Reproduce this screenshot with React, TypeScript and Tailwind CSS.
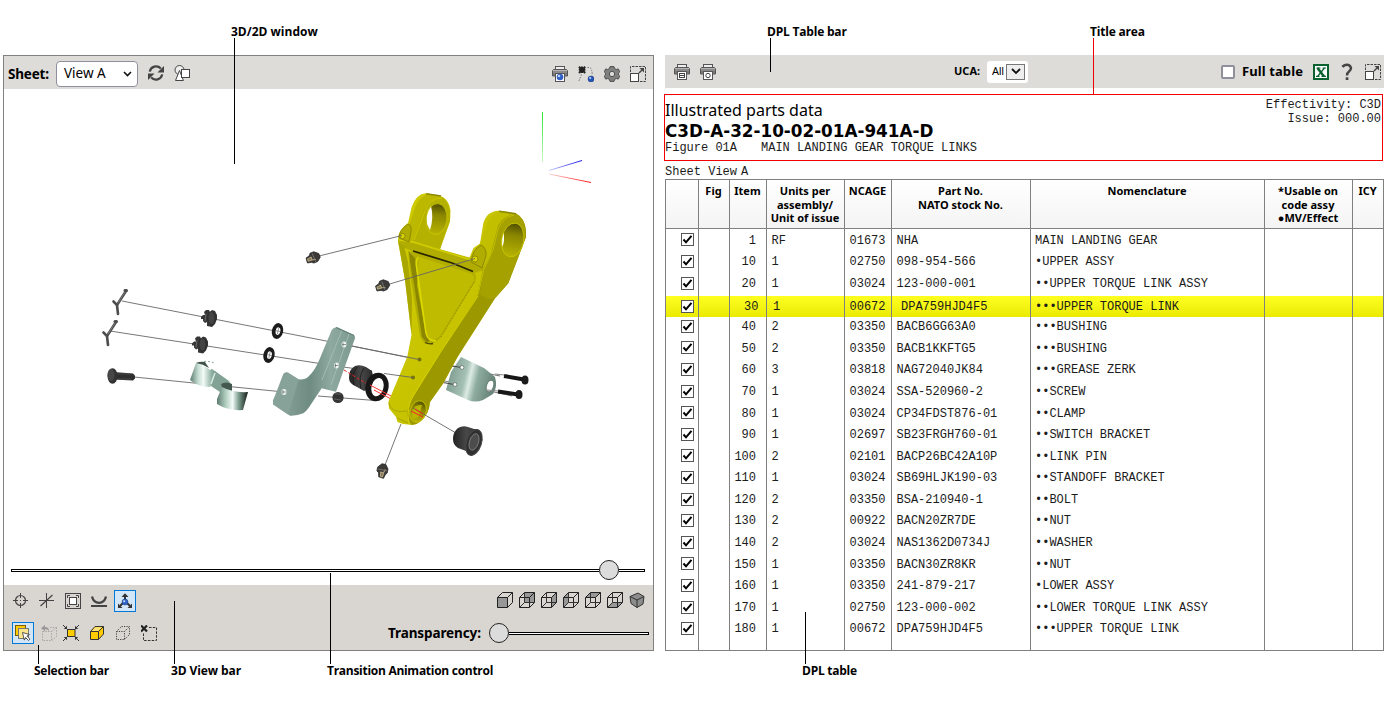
import React from "react";

type Part = { item: string; units: string; cage: string; part: string; name: string; active?: boolean };

const parts: Part[] = [
  { item: "1", units: "RF", cage: "01673", part: "NHA", name: "MAIN LANDING GEAR" },
  { item: "10", units: "1", cage: "02750", part: "098-954-566", name: "•UPPER ASSY" },
  { item: "20", units: "1", cage: "03024", part: "123-000-001", name: "••UPPER TORQUE LINK ASSY" },
  { item: "30", units: "1", cage: "00672", part: "DPA759HJD4F5", name: "•••UPPER TORQUE LINK", active: true },
  { item: "40", units: "2", cage: "03350", part: "BACB6GG63A0", name: "•••BUSHING" },
  { item: "50", units: "2", cage: "03350", part: "BACB1KKFTG5", name: "•••BUSHING" },
  { item: "60", units: "3", cage: "03818", part: "NAG72040JK84", name: "•••GREASE ZERK" },
  { item: "70", units: "1", cage: "03024", part: "SSA-520960-2", name: "••SCREW" },
  { item: "80", units: "1", cage: "03024", part: "CP34FDST876-01", name: "••CLAMP" },
  { item: "90", units: "1", cage: "02697", part: "SB23FRGH760-01", name: "••SWITCH BRACKET" },
  { item: "100", units: "2", cage: "02101", part: "BACP26BC42A10P", name: "••LINK PIN" },
  { item: "110", units: "1", cage: "03024", part: "SB69HLJK190-03", name: "••STANDOFF BRACKET" },
  { item: "120", units: "2", cage: "03350", part: "BSA-210940-1", name: "••BOLT" },
  { item: "130", units: "2", cage: "00922", part: "BACN20ZR7DE", name: "••NUT" },
  { item: "140", units: "2", cage: "03024", part: "NAS1362D0734J", name: "••WASHER" },
  { item: "150", units: "1", cage: "03350", part: "BACN30ZR8KR", name: "••NUT" },
  { item: "160", units: "1", cage: "03350", part: "241-879-217", name: "•LOWER ASSY" },
  { item: "170", units: "1", cage: "02750", part: "123-000-002", name: "••LOWER TORQUE LINK ASSY" },
  { item: "180", units: "1", cage: "00672", part: "DPA759HJD4F5", name: "•••UPPER TORQUE LINK" },
];

const SANS = "font-['Noto_Sans',sans-serif]";
const MONO = "font-['Liberation_Mono',monospace] text-[#1c1c1c]";
const COLS = "grid grid-cols-[33px_31px_37px_78px_47px_139px_234px_88px_31px]";

function Icon({ children, size = 16 }: { children: React.ReactNode; size?: number }) {
  return (
    <svg width={size} height={size} viewBox="0 0 16 16" fill="none" className="block shrink-0">
      {children}
    </svg>
  );
}

function RefreshIcon() {
  return (
    <Icon>
      <path d="M1.8 6.6A6.400 6.400 0 0 1 12.800 3.400M14.200 9.400A6.400 6.400 0 0 1 3.200 12.600" stroke="#444" strokeWidth="2.200" />
      <path d="M16 1V7.600H9.400zM0 15V8.400h6.600z" fill="#444" />
    </Icon>
  );
}

function ShapesIcon() {
  return (
    <Icon>
      <circle cx="5.5" cy="5" r="4.5" stroke="#444" fill="#eee" />
      <path d="M5.5 5.5L9.4 15.5H1.5z" fill="#fff" stroke="#444" />
      <rect x="7.5" y="4.5" width="8" height="8" fill="#fff" stroke="#444" />
    </Icon>
  );
}

function Printer({ mark }: { mark: "globe" | "page" | "circle" }) {
  return (
    <Icon>
      <rect x="3.5" y=".5" width="9" height="4" fill="#eee" stroke="#555" />
      <path d="M1.5 3.5h13l1 1.5v5h-15V5z" fill="#8b8b8b" stroke="#555" />
      <path d="M1 4.5h14" stroke="#b5b5b5" />
      <path d="M1 8h14" stroke="#666" />
      <rect x="3.5" y="7.5" width="9" height="8" fill="#fff" stroke="#555" />
      {mark === "globe" && (
        <>
          <circle cx="8" cy="11" r="3.3" fill="#2f5fc4" />
          <circle cx="7" cy="10" r="1.3" fill="#b8d0ff" />
        </>
      )}
      {mark === "page" && <path d="M5 9.5h6M5 13.5h6M5.5 9v5M10.5 9v5M6 11.5h4" stroke="#444" />}
      {mark === "circle" && <circle cx="8" cy="11.5" r="2.2" stroke="#444" />}
    </Icon>
  );
}

function PathIcon() {
  return (
    <Icon>
      <path d="M1 .8l6.200 6.200M7.200 .8L1 7M4 .5v6.500M.8 3.800h6.600" stroke="#222" strokeWidth="2" />
      <path d="M9.5 1.5h2.5q2 1 2.3 8M3.5 8.5L.5 16" stroke="#777" strokeDasharray="1.5 1.2" />
      <circle cx="13" cy="13" r="3" fill="#2456b8" stroke="#14306e" strokeWidth=".5" />
      <circle cx="12.2" cy="12" r="1.1" fill="#bcd3ff" />
    </Icon>
  );
}

function GearIcon() {
  return (
    <Icon>
      <path
        d="M6 .6h4l.6 2 1.6.9 2.1-.6 1.5 3-1.3 1.2v1.8l1.3 1.2-1.5 3-2.1-.6-1.6.9-.6 2H6l-.6-2-1.6-.9-2.1.6-1.5-3 1.3-1.2V7.1L.2 5.9l1.5-3 2.1.6 1.6-.9z"
        fill="#808080"
        stroke="#505050"
      />
      <circle cx="8" cy="8" r="2.7" fill="#dddcd8" stroke="#505050" />
    </Icon>
  );
}

function ExpandIcon() {
  return (
    <Icon>
      <path d="M.5 6V.5h15v15H9" stroke="#444" strokeDasharray="2.5 1" />
      <rect x=".5" y="7.5" width="8" height="8" fill="#fff" stroke="#444" />
      <path d="M9 7l3-3" stroke="#444" strokeWidth="1.5" />
      <path d="M9.5 2H14v4.5z" fill="#444" />
    </Icon>
  );
}

function TargetIcon() {
  return (
    <Icon>
      <circle cx="7.500" cy="7.500" r="5" stroke="#444" strokeWidth="1.200" />
      <path d="M7.500 0v5M7.500 10v5M0 7.500h5M10 7.500h5M7 7.500h1" stroke="#444" />
    </Icon>
  );
}

function AxesIcon() {
  return (
    <Icon>
      <path d="M7.500 0v15M0 7.500h15" stroke="#444" />
      <path d="M1.500 13L13.500 2" stroke="#444" strokeWidth="1.200" />
    </Icon>
  );
}

function FitIcon() {
  return (
    <Icon>
      <rect x=".5" y=".5" width="15" height="15" stroke="#444" />
      <path d="M2.5 5V2.5H5M11 2.5h2.5V5M13.5 11v2.5H11M5 13.5H2.5V11" stroke="#444" />
      <rect x="4.5" y="4.5" width="7" height="7" fill="#fff" stroke="#444" />
    </Icon>
  );
}

function SurfaceIcon() {
  return (
    <Icon>
      <path d="M0 13h16" stroke="#444" strokeWidth="2" />
      <path d="M1 3.500q1.500 6.300 7 6.300T15 3.500" stroke="#444" strokeWidth="2.300" />
    </Icon>
  );
}

function ExplodeIcon() {
  return (
    <Icon>
      <path d="M8 7V3M7 9l-4 4M9 9l4 4" stroke="#333" strokeWidth="2" />
      <path d="M4.5 4L8 .3 11.5 4zM1 10.5V15h4.5zM15 10.5V15h-4.5z" fill="#333" />
      <circle cx="8" cy="9" r="3" fill="#2f63c8" stroke="#1c3b80" strokeWidth=".5" />
      <circle cx="7.2" cy="8.2" r="1" fill="#cfe0ff" />
    </Icon>
  );
}

function SelectIcon() {
  return (
    <Icon>
      <rect x=".5" y=".5" width="10" height="10" fill="#fc0" stroke="#7a5c00" />
      <rect x="3.500" y="3.500" width="10" height="10" fill="#ffe58a" stroke="#777" />
      <path d="M7.5 7.5l7 2-2.6 1.6 3 3-1.5 1.4-2.8-3-1.3 2.6z" fill="#fff" stroke="#444" strokeWidth=".9" />
    </Icon>
  );
}

function UndoCubeIcon() {
  return (
    <Icon>
      <path d="M1.5 6.5h9v9h-9zM10.5 6.5l5-4M15.5 2.5v9l-4.5 4M9 2.5h6.500" stroke="#a5a5a5" strokeDasharray="1.5 1.2" />
      <path d="M0 3.200L4 0v2q4 .2 4 4-1.300-2-4-1.800v2z" fill="#999" />
    </Icon>
  );
}

function ConvergeIcon() {
  return (
    <Icon>
      <rect x="4.500" y="4.500" width="7.500" height="7" fill="#fc0" stroke="#333" />
      <path d="M0 0l3.500 3.500M16 0l-3.500 3.500M0 16l3.500-3.500M16 16l-3.500-3.500" stroke="#333" />
      <path d="M4 .8V4H.8zM12 .8V4h3.200zM4 15.200V12H.8zM12 15.200V12h3.200z" fill="#333" />
    </Icon>
  );
}

function YellowCubeIcon() {
  return (
    <Icon>
      <path d="M1.500 6.500L6 1.500h8.500V9L9.500 14.500h-8z" fill="#fc0" stroke="#333" />
      <path d="M3 6L6.300 2.200H13L9.200 6z" fill="#ffe27a" />
      <path d="M1.500 6.500h8v8M9.500 6.500l5-5" stroke="#333" />
    </Icon>
  );
}

function DottedCubeIcon() {
  return (
    <Icon>
      <path d="M1.500 6.500h8v8h-8zM1.500 6.500l5-5h8v8l-5 5M9.500 6.500l5-5" stroke="#444" strokeDasharray="1.200 1.200" />
    </Icon>
  );
}

function DeselectIcon() {
  return (
    <Icon>
      <path d="M0 .500l6 6M6 .500l-6 6" stroke="#222" strokeWidth="2.200" />
      <path d="M8 2.500h7.500v13h-13V8" stroke="#333" strokeDasharray="2.500 1.300" />
    </Icon>
  );
}

const cubeFaces = [
  "M.5 5.500h10v10h-10z",
  "M5.500 .500h10v10h-10z",
  "M10.500 5.500L15.500 .500v10l-5 5z",
  "M.5 5.500L5.500 .500v10l-5 5z",
  "M.5 5.500L5.500 .500h10l-5 5z",
  "M.5 15.500L5.500 10.500h10l-5 5z",
];

function CubeIcon({ face }: { face: number }) {
  return (
    <Icon>
      <path d={cubeFaces[face]} fill="#979797" />
      <path d="M.5 5.500h10v10h-10zM.5 5.500L5.500 .500h10v10l-5 5M10.500 5.500L15.500 .500" stroke="#222" />
      {face !== 0 && <path d="M5.500 .500v10h10M5.500 10.500l-5 5" stroke="#333" />}
    </Icon>
  );
}

function IsoCubeIcon() {
  return (
    <Icon>
      <path d="M1 4.500L9 1l6 3.500-1 7.500-6 3.500-6-4z" fill="#8c8c8c" stroke="#333" strokeLinejoin="round" />
      <path d="M1 4.500l7 3.500 7-3.500M8 8v7.500" stroke="#333" />
    </Icon>
  );
}

function ExcelIcon() {
  return (
    <Icon>
      <rect x="1" y="1" width="14" height="14" fill="#fff" stroke="#0b6130" strokeWidth="2" />
      <path d="M4.500 4l6.500 8.500" stroke="#0b6130" strokeWidth="2.500" />
      <path d="M11.500 4l-7 8.500M3.500 4h4M9.500 4H13M3 12.300h3.500M8.500 12.300H13" stroke="#0b6130" strokeWidth="1.200" />
    </Icon>
  );
}

function Nut({ x, y }: { x: number; y: number }) {
  return (
    <g transform={`translate(${x} ${y})`}>
      <path d="M-7-1l2-2 2 0-1-3 2-2 3 0 1 2 2-2 3 1 2 4 0 4-2 5-3 3-5-1v-4l-2 1-2-2 0-2-2 0z" fill="#363636" />
      <path d="M-2-4l-1 7M2-5q-2 5 0 10" stroke="#777" strokeWidth=".8" fill="none" />
      <ellipse cx="3.500" cy="0" rx="3.500" ry="6.500" fill="#444" stroke="#222" strokeWidth=".6" />
    </g>
  );
}

function Washer({ x, y }: { x: number; y: number }) {
  return (
    <g transform={`translate(${x} ${y}) rotate(12)`}>
      <ellipse rx="5.600" ry="8" fill="#1b1b1b" />
      <ellipse cx=".5" rx="2.300" ry="3.800" fill="#fff" />
      <path d="M-2 0H3M.5-3V3" stroke="#777" strokeWidth=".7" />
    </g>
  );
}

function Cotter({ x, y }: { x: number; y: number }) {
  return (
    <g transform={`translate(${x} ${y})`} stroke="#4c4c4c" strokeLinecap="round" fill="none">
      <path d="M0 0l9-14" strokeWidth="2.600" />
      <path d="M-3.500-3.500L0 0l1 9" strokeWidth="2.600" />
      <path d="M1-2l7-11" stroke="#8b8b8b" strokeWidth=".7" />
      <path d="M8-14.500h1.500" strokeWidth="3" />
    </g>
  );
}

function Zerk({ x, y, r }: { x: number; y: number; r: number }) {
  return (
    <g transform={`translate(${x} ${y}) rotate(${r})`}>
      <path d="M-6.500-2.500l4-1 1.500-2h4l4 3.500v4L3 5h-4l-2-1.500-4-1z" fill="#3c3a38" stroke="#252525" strokeWidth=".7" strokeLinejoin="round" />
      <path d="M-5.500-1l4-.5v3l-4-.3zM-1 1.500l3 1" stroke="#b7a985" fill="#827758" />
      <path d="M1-4.500v9" stroke="#85817b" strokeWidth=".7" />
    </g>
  );
}

function Assembly() {
  return (
    <svg className="block" width="649" height="496" viewBox="4 89 649 496" fill="none">
      <defs>
        <linearGradient id="teal" x1="0" x2="1">
          <stop offset="0" stopColor="#8fa89f" />
          <stop offset=".45" stopColor="#6f8c82" />
          <stop offset=".7" stopColor="#8eaaa0" />
          <stop offset="1" stopColor="#7c998f" />
        </linearGradient>
        <linearGradient id="shine" x1="0" x2="1" y2=".2">
          <stop offset="0" stopColor="#718f84" />
          <stop offset=".45" stopColor="#a5c0b5" />
          <stop offset=".55" stopColor="#dcebe5" />
          <stop offset=".7" stopColor="#8dab9f" />
          <stop offset="1" stopColor="#6b877c" />
        </linearGradient>
        <linearGradient id="clampFill" x1="0" x2="1">
          <stop offset="0" stopColor="#5d7b6f" />
          <stop offset=".25" stopColor="#a8c6b8" />
          <stop offset=".5" stopColor="#f3fbf8" />
          <stop offset=".7" stopColor="#7e9e91" />
          <stop offset="1" stopColor="#151c19" />
        </linearGradient>
        <linearGradient id="clampLeft" x1="0" x2="1">
          <stop offset="0" stopColor="#5d7b6f" />
          <stop offset=".3" stopColor="#c4dcd1" />
          <stop offset=".5" stopColor="#f3fbf8" />
          <stop offset=".8" stopColor="#8fb0a2" />
          <stop offset="1" stopColor="#6f8f82" />
        </linearGradient>
        <linearGradient id="front" x1="0" y1="0" x2="1" y2="1">
          <stop offset="0" stopColor="#d0cc00" />
          <stop offset="1" stopColor="#bfbb00" />
        </linearGradient>
        <linearGradient id="bore" x1="0" y1="0" x2="0" y2="1">
          <stop offset="0" stopColor="#4f4d00" />
          <stop offset=".35" stopColor="#8a8600" />
          <stop offset="1" stopColor="#b8b400" />
        </linearGradient>
        <linearGradient id="dark" x1="0" x2="1">
          <stop offset="0" stopColor="#232323" />
          <stop offset=".5" stopColor="#484848" />
          <stop offset="1" stopColor="#2a2a2a" />
        </linearGradient>
        <linearGradient id="axisGreen" x1="0" y1="0" x2="0" y2="1">
          <stop offset="0" stopColor="#2be52b" />
          <stop offset="1" stopColor="#c8fac8" />
        </linearGradient>
        <linearGradient id="axisBlue" x1="0" x2="1">
          <stop offset="0" stopColor="#d0d0ff" />
          <stop offset="1" stopColor="#1414e0" />
        </linearGradient>
        <linearGradient id="axisRed" x1="0" x2="1">
          <stop offset="0" stopColor="#ffd8d8" />
          <stop offset="1" stopColor="#ff1414" />
        </linearGradient>
      </defs>

      <rect x="542" y="112" width="1" height="50" fill="url(#axisGreen)" />
      <path d="M549 170.500L582 160.500" stroke="url(#axisBlue)" />
      <path d="M549 174L591 182.500" stroke="url(#axisRed)" />

      <g stroke="#777" strokeWidth="1">
        <path d="M122 301L344 344.500M110 331L336 366M134 377L284 392M344 344.500L500 376M336 366L372 371M318 396L375 400.500M440 380L512 396" />
      </g>

      <Cotter x={117} y={305} />
      <Cotter x={107} y={336} />
      <Nut x={208} y={318} />
      <Nut x={199} y={344.500} />
      <Washer x={277.500} y={331} />
      <Washer x={269} y={355} />

      <path d="M113 372l20 1.500 2 2v3l-2 2-20-1z" fill="#2f2f2f" />
      <path d="M117 374h15M117 379h14" stroke="#555" strokeWidth=".6" />
      <ellipse cx="112.500" cy="376" rx="5" ry="7.800" fill="#333" />
      <ellipse cx="111" cy="375" rx="3.500" ry="6" fill="#474747" />

      <path d="M196 363Q204 361 211 368L217 373L210 387Q198 387 190 380z" fill="url(#clampLeft)" />
      <path d="M196 363q8-2 18 1l-1 4-3 2q-6-5-14-7z" fill="#fff" />
      <path d="M196 363q4-2 9-1l4 6q-6-4-13-5z" fill="#405249" />
      <path d="M204 361.500q6-.5 10 1.500" stroke="#8aa398" strokeDasharray="2 2" />
      <path d="M215 371l14 10 3 5-9 8-12-8z" fill="#81a294" />
      <path d="M215 373l-4 11" stroke="#d8eae2" strokeWidth="1.500" />
      <path d="M221 384q5-3 11 0v7l-8 3z" fill="#45584f" />
      <path d="M222 387Q233 393 248 392L243 410Q228 411 217 404V399z" fill="url(#clampFill)" />

      <path d="M331.700 330Q334 326.500 338 327.500L354 335Q356 337 354 341L336 391.700Q328 390 321.700 388.300L311.700 403.300Q307 411 303.300 413.300Q297 416 290 415.700L273.300 404V400L283.300 374Q285 371.500 288 372.500L298.300 379.300Q305 380 308.300 376.700Q315 371 320 358.300z" fill="url(#teal)" />
      <path d="M287 372.500l12 7-11 35-15-10v-4z" fill="#87a298" />
      <path d="M338 328l4 2-20 50M349 334l-18 51" stroke="#a1bcb2" strokeWidth="1" />
      <path d="M336 327.500l18 8" stroke="#5e7b70" />
      {[[344, 344.500], [336.500, 365.500], [284, 392]].map(([cx, cy]) => (
        <g key={cx}>
          <ellipse cx={cx} cy={cy} rx="2.400" ry="3" fill="#eef4f1" />
          <path d={`M${cx - 1} ${cy - 2}v4M${cx - 2} ${cy}h4`} stroke="#5c6b65" strokeWidth=".7" />
        </g>
      ))}

      <circle cx="338" cy="397.500" r="5.600" fill="#343434" />
      <path d="M335 394l6 0M334 399l7 1" stroke="#5e5e5e" />

      <path d="M349 378q0-9 6-12 5-2 11 1l6 4 1 5-4 13-5 2-7-4q-8-3-8-9z" fill="url(#dark)" />
      <path d="M357 367q-6 8-3 18M364 368q-6 9-3 21" stroke="#171717" strokeWidth=".8" />
      <path d="M344 370L372 387" stroke="#e22" strokeDasharray="3 2" />
      <g transform="rotate(14 377 387)">
        <ellipse cx="377" cy="387" rx="11.500" ry="14.500" fill="#171717" />
        <ellipse cx="377.500" cy="387" rx="6" ry="9.300" fill="#fff" />
      </g>
      <path d="M370 385L391 396M374 390l17 9" stroke="#f33" />

      <path d="M461 357l23 11 11 9q3 10-2 17l-10 6q-8 3-15 0l-22-10 5-18z" fill="url(#shine)" />
      <ellipse cx="490" cy="386" rx="3.500" ry="6" fill="#fff" stroke="#647c72" transform="rotate(18 490 386)" />
      {[[462, 367.500], [455, 384.500]].map(([cx, cy]) => (
        <g key={cx}>
          <path d={`M${cx - 12} ${cy - 2}l11 2`} stroke="#444" />
          <circle cx={cx} cy={cy} r="1.900" fill="#fff" stroke="#53675e" strokeWidth=".7" />
        </g>
      ))}
      <path d="M495 374l9 1M487 390l11 1" stroke="#888" />
      <path d="M504 376l20 3.500M498 391.500l20 3" stroke="#171717" strokeWidth="4" />
      <ellipse cx="525" cy="380" rx="3.500" ry="4.500" fill="#1b1b1b" />
      <ellipse cx="519" cy="394.500" rx="3.500" ry="4.500" fill="#1b1b1b" />

      <path
        d="M398 241L398.500 235Q401 228 408 223L411.700 207Q416 194 426 193.300L439 195.300Q449 199 450.500 210L450 221.700L440 249.300L469.500 257.500L473.500 248L480 243.500L483.300 223.300Q487 211 498.300 210.700L516 213.500Q525 218 526 231V237L508.300 283.300L495 298.300L457.500 357L443.300 383.300L430 402Q429 415 420 421.700Q416 425 411.700 425L408 424.500L403 424L397.500 422L396 417L389 408.500L388.300 402L407.300 356.700L411.500 335L405 280z"
        fill="url(#front)"
      />
      <path d="M516 213.500Q525 218 526 231V237L508.300 283.300L495 298.300L457.500 357L443.300 383.300L430 402Q429 415 420 421.700Q416 425 411.700 425Q406 418 408 409L412 399L440 353.300L477.500 296L483 269L491 253L497 226Q504 214 516 213.500z" fill="#9c9800" />
      <path d="M478 296L440 353L413 396Q406 408 409 423" stroke="#d4d000" strokeWidth="1" />
      <path d="M415 208Q419 197 428 194L442 197Q431 198 427 207L416 240L407 242L409 225z" fill="#bcb800" />
      <path d="M442 197Q451 203 450 220L440 249L413 241L424 210Q430 198 442 197z" fill="#b5b100" />
      <path d="M487 224Q491 213 501 211L516 214Q504 215 498 226L491 253L483 268L475 258z" fill="#c2be00" />
      <path d="M516 214Q527 221 525 238L508 283L496 297Q490 302 480 294L484 269L492 253L499 226Q505 215 516 214z" fill="#a5a100" />
      <path d="M426 193.800l15 2.200M499 211.300l17 2.500" stroke="#8c8800" strokeWidth="1.600" />
      <path d="M442 198Q430 198 425 211L414 240" stroke="#cbc700" />
      <path d="M514 215Q503 217 498 229L493 250L484 269L478 295" stroke="#c3bf00" />

      <ellipse cx="436.500" cy="219" rx="10.500" ry="15.500" fill="url(#bore)" transform="rotate(7 436.500 219)" />
      <path d="M431 206Q434 218 430 230Q425 223 427 214Q428 209 431 206z" fill="#fff" />
      <ellipse cx="436.500" cy="219" rx="10.500" ry="15.500" stroke="#cbc700" strokeWidth=".8" transform="rotate(7 436.500 219)" />
      <ellipse cx="512.700" cy="240" rx="11" ry="17" fill="url(#bore)" transform="rotate(10 512.700 240)" />
      <path d="M503.500 232Q505 240 502.500 247Q500.500 241 503.500 232z" fill="#fff" />
      <ellipse cx="512.700" cy="240" rx="11" ry="17" stroke="#cbc700" strokeWidth=".8" transform="rotate(10 512.700 240)" />

      <path d="M398 239.500L412 241L482 262L484 270L474 273L411 250.500L399 246z" fill="#b1ad00" />
      <path d="M399 240L413 242L481 263" stroke="#d2ce00" strokeWidth="1.400" />
      <path d="M398.500 243L405 280L411.500 334L412 300L408 262L404 246z" fill="#aaa600" />
      <path d="M408 251L420 253L474 272.500Q477 276 475.500 281L441 337Q435 345 427 344Q423 343 420 336L411 280z" fill="#b2ae00" />
      <path d="M409 252Q410 264 414 284L422 337L427 343L430 340L418 282L415 258z" fill="#8a8600" />
      <path d="M419 257L472 274Q475 277 474 281L440 336L433 341L426 334L417 285z" fill="#bfbb00" />
      <path d="M418.500 257Q415 260 417 270L426 333Q428 341 436 341" stroke="#dcd900" strokeWidth="1.600" />
      <path d="M413 251L452 263L473 271.500" stroke="#272600" strokeWidth="1.800" />
      <path d="M425 342.500q4 2 8 1" stroke="#4a4800" strokeWidth="1.300" />
      <path d="M474 282L441 337" stroke="#7b7700" strokeWidth=".8" strokeDasharray="1 2" />

      <path d="M399 238Q399 230 408 224Q412 225 411 232L409 242z" fill="#b0ac00" stroke="#7d7900" strokeWidth=".7" />
      <circle cx="402.500" cy="236" r="2.600" fill="#d9d500" stroke="#858200" strokeWidth=".8" />
      <path d="M471 262Q472 250 481 245Q487 248 486 256L482 268z" fill="#b0ac00" stroke="#7d7900" strokeWidth=".7" />
      <circle cx="475" cy="259" r="3" fill="#d9d500" stroke="#858200" strokeWidth=".8" />

      <path d="M389 403Q391 414 407 411M397 418l11 5" stroke="#aaa600" />
      <ellipse cx="418" cy="411.500" rx="8" ry="11" fill="url(#bore)" stroke="#cbc700" strokeWidth=".8" transform="rotate(20 418 411.500)" />
      <path d="M412 411q3-7 10-6l-3 11q-4 4-7 2z" fill="#b9b500" />
      <circle cx="419.500" cy="359.500" r="2" fill="#777400" />
      <circle cx="413" cy="377.500" r="2" fill="#777400" />

      <g stroke="#666" strokeWidth=".9">
        <path d="M317 256.500L402 235.500M388 284.500L475 258.500M352 346L419 359.500M384 373.500L413 377.500M401 424L385 465M413 408L456 433" />
      </g>
      <path d="M411 411l12 6M415 409l8 5" stroke="#f22" />

      <Zerk x={313} y={258} r={-22} />
      <Zerk x={382.500} y={286} r={-22} />
      <Zerk x={382.500} y={471} r={-78} />

      <path d="M453 439q0-7 5-11 5-3 10-1l6 2 6 1-8 26q-4-1-6-5l-8-3q-5-3-5-9z" fill="url(#dark)" />
      <ellipse cx="474" cy="442.500" rx="7.500" ry="13.300" fill="#303030" stroke="#484848" transform="rotate(18 474 442.500)" />
      <ellipse cx="474" cy="442" rx="4.500" ry="8.500" fill="#4c4c4c" stroke="#858585" strokeWidth=".8" transform="rotate(18 474 442)" />
    </svg>
  );
}

function Slider({ knobAt, className }: { knobAt: "start" | "end"; className: string }) {
  return (
    <div className={`flex items-center ${className}`}>
      {knobAt === "end" && <div className="h-[3px] flex-1 border border-r-0 border-black bg-white" />}
      <div className="size-5 rounded-full border border-[#222] bg-[#dcdcdc]" />
      <div className={`h-[3px] border border-l-0 border-black bg-white ${knobAt === "end" ? "w-[26px]" : "flex-1"}`} />
    </div>
  );
}

function Tool({ children, on }: { children: React.ReactNode; on?: boolean }) {
  return (
    <div className={`flex size-[22px] items-center justify-center border ${on ? "border-[#0078d7] bg-[#d3e6f7]" : "border-transparent"}`}>
      {children}
    </div>
  );
}

function ViewerPanel() {
  return (
    <section className="flex h-[596px] w-[651px] flex-col border border-[#808080] bg-white">
      <div className="flex h-[33px] shrink-0 items-center bg-[#dddcd8] pr-[7px] pl-1">
        <span className={`${SANS} w-[48px] pt-[3px] text-[13.5px] font-bold tracking-[-0.2px] whitespace-nowrap`}>Sheet:</span>
        <div className="mt-[2px] flex h-[26px] w-[82px] items-center justify-between rounded-[4px] border border-[#8f8f9d] bg-white pr-[5px] pl-[7px]">
          <span className={`${SANS} text-[13.5px]`}>View A</span>
          <svg width="9" height="6" viewBox="0 0 9 6"><path d="M1 1l3.500 3.500L8 1" fill="none" stroke="#111" strokeWidth="1.600" /></svg>
        </div>
        <div className="ml-[10px] flex gap-[10px] pt-[1px]"><RefreshIcon /><ShapesIcon /></div>
        <div className="ml-auto flex gap-[10px] pt-[3px]"><Printer mark="globe" /><PathIcon /><GearIcon /><ExpandIcon /></div>
      </div>
      <div className="relative h-[496px] shrink-0">
        <Assembly />
        <Slider knobAt="end" className="absolute top-[471px] left-[7px] w-[634px]" />
      </div>
      <div className="flex flex-1 flex-col bg-[#d9d6d1]">
        <div className="flex items-start justify-between pt-[5px] pr-[8px] pl-[6px]">
          <div className="flex gap-1">
            <Tool><TargetIcon /></Tool>
            <Tool><AxesIcon /></Tool>
            <Tool><FitIcon /></Tool>
            <Tool><SurfaceIcon /></Tool>
            <Tool on><ExplodeIcon /></Tool>
          </div>
          <div className="flex gap-1.5 pt-[2px]">
            {[0, 1, 2, 3, 4, 5].map((f) => <CubeIcon key={f} face={f} />)}
            <IsoCubeIcon />
          </div>
        </div>
        <div className="mt-[10px] flex items-center justify-between pr-1 pl-2">
          <div className="flex gap-1">
            <Tool on><SelectIcon /></Tool>
            <Tool><UndoCubeIcon /></Tool>
            <div className="-ml-1 flex gap-1">
              <Tool><ConvergeIcon /></Tool>
              <Tool><YellowCubeIcon /></Tool>
              <Tool><DottedCubeIcon /></Tool>
              <Tool><DeselectIcon /></Tool>
            </div>
          </div>
          <div className="flex items-center">
            <span className={`${SANS} w-[101px] text-[13.5px] font-bold tracking-[-0.1px] whitespace-nowrap`}>Transparency:</span>
            <Slider knobAt="start" className="w-[160px]" />
          </div>
        </div>
      </div>
    </section>
  );
}

function TableBar() {
  return (
    <div className="flex h-[33px] items-center bg-[#dddcd8] pr-[3px] pl-[9px]">
      <div className="flex gap-[10px]"><Printer mark="page" /><Printer mark="circle" /></div>
      <span className={`${SANS} ml-[238px] w-[33px] text-[11px] font-bold whitespace-nowrap`}>UCA:</span>
      <div className="flex h-[22px] w-[41px] items-center justify-between rounded-[3px] bg-white pr-[3px] pl-[5px]">
        <span className={`${SANS} text-[11px] tracking-[-0.3px]`}>All</span>
        <span className="flex h-4 w-[19px] items-center justify-center border border-[#777] bg-[#eee]">
          <svg width="10" height="7" viewBox="0 0 10 7"><path d="M1 1l4 4 4-4" fill="none" stroke="#111" strokeWidth="1.800" /></svg>
        </span>
      </div>
      <span className="ml-auto size-[14px] rounded-[2px] border-2 border-[#8f8f9d] bg-white" />
      <span className={`${SANS} ml-[7px] w-[71px] text-[13px] font-bold tracking-[0.1px] whitespace-nowrap`}>Full table</span>
      <ExcelIcon />
      <svg width="12" height="18" viewBox="0 0 12 18" className="mr-3 ml-3 block" fill="none">
        <path d="M1.500 4Q3 1.700 6 1.700T10 5Q10 7 8 8.500T6 12.500" stroke="#444" strokeWidth="2.500" />
        <rect x="4.700" y="14.300" width="2.700" height="2.700" fill="#444" />
      </svg>
      <ExpandIcon />
    </div>
  );
}

function PartsTable() {
  const head = ["", "Fig", "Item", "Units per\nassembly/\nUnit of issue", "NCAGE", "Part No.\nNATO stock No.", "Nomenclature", "*Usable on\ncode assy\n●MV/Effect", "ICY"];
  return (
    <div className="relative h-[472px] w-[719px] border border-[#808080]">
      <div className={`${COLS} h-[49px] border-b border-[#808080] bg-linear-to-b from-white to-[#f4f4f5]`}>
        {head.map((h, i) => (
          <div key={i} className={`${SANS} pt-[4px] pr-[2px] text-center text-[11px] leading-[13.500px] font-bold whitespace-pre`}>{h}</div>
        ))}
      </div>
      <div className="pt-[0.2px]">
        {parts.map((p) => (
          <div
            key={p.item}
            className={`${COLS} ${MONO} items-center text-[12px] whitespace-pre ${p.active ? "mt-[2px] -mb-[1.4px] h-[21px] bg-linear-to-b from-[#ffff20] to-[#eaea00]" : "h-[21.6px]"}`}
          >
            <span className="ml-[15px] flex size-[13px] items-center justify-center border border-[#555] bg-white">
              <svg width="11" height="11" viewBox="0 0 11 11"><path d="M1.500 5.500L4 8.300 9.500 1.800" fill="none" stroke="#000" strokeWidth="2" /></svg>
            </span>
            <span />
            <span className={p.active ? "pt-[1.500px] pr-[8.500px] text-right" : "pt-[1.500px] pr-[11px] text-right"}>{p.item}</span>
            <span className={p.active ? "pt-[1.500px] pl-[6px]" : "pt-[1.500px] pl-[4.500px]"}>{p.units}</span>
            <span className="pt-[1.500px] pl-[4.500px]">{p.cage}</span>
            <span className={p.active ? "pt-[1.500px] pl-[9px]" : "pt-[1.500px] pl-[4.500px]"}>{p.part}</span>
            <span className="pt-[1.500px] pl-[4px]">{p.name}</span>
          </div>
        ))}
      </div>
      <div className={`${COLS} pointer-events-none absolute inset-0`}>
        {[0, 1, 2, 3, 4, 5, 6, 7].map((i) => <div key={i} className="border-r border-[#808080]" />)}
      </div>
    </div>
  );
}

function DataPanel() {
  return (
    <section className="flex w-[719px] flex-col">
      <TableBar />
      <div className="mt-[6px] -ml-px flex h-[67px] w-[719px] justify-between border border-[#f00000]">
        <div>
          <div className={`${SANS} mt-[4px] h-[22px] text-[16px] leading-[22px] whitespace-nowrap`}>Illustrated parts data</div>
          <div className="h-[20px] font-['DejaVu_Sans',sans-serif] text-[16.800px] leading-[20px] font-bold whitespace-nowrap">C3D-A-32-10-02-01A-941A-D</div>
          <div className={`${MONO} text-[12px] leading-[14px] whitespace-pre`}>Figure 01A<span className="pl-6">MAIN LANDING GEAR TORQUE LINKS</span></div>
        </div>
        <div className={`${MONO} pt-[3px] pr-px text-right text-[12px] leading-[14px]`}>
          <div>Effectivity: C3D</div>
          <div>Issue: 000.00</div>
        </div>
      </div>
      <div className={`${MONO} h-[18px] pt-[4px] text-[12px] leading-[14px]`}>Sheet View<span className="pl-1">A</span></div>
      <PartsTable />
    </section>
  );
}

const labelFont = "absolute font-['Open_Sans',sans-serif] text-[12px] leading-4 font-bold whitespace-nowrap";

export default function App() {
  return (
    <main className="relative flex h-[708px] w-[1384px] gap-[11px] overflow-hidden bg-white pt-[55px] pl-[3px] text-black">
      <ViewerPanel />
      <DataPanel />

      <div className="absolute top-[38px] left-[234px] h-[126px] w-px bg-black" />
      <div className="absolute top-[38px] left-[770px] h-[34px] w-px bg-black" />
      <div className="absolute top-[38px] left-[1093px] h-[56px] w-px bg-[#f00000]" />
      <div className="absolute top-[645px] left-[38px] h-[19px] w-px bg-black" />
      <div className="absolute top-[601px] left-[174px] h-[63px] w-px bg-black" />
      <div className="absolute top-[573px] left-[330px] h-[91px] w-px bg-black" />
      <div className="absolute top-[612px] left-[805px] h-[52px] w-px bg-black" />

      <span className={`${labelFont} top-[24px] left-[231px]`}>3D/2D window</span>
      <span className={`${labelFont} top-[24px] left-[767px] tracking-[-0.2px]`}>DPL Table bar</span>
      <span className={`${labelFont} top-[24px] left-[1090px] tracking-[-0.2px]`}>Title area</span>
      <span className={`${labelFont} top-[663px] left-[34px] tracking-[-0.25px]`}>Selection bar</span>
      <span className={`${labelFont} top-[663px] left-[171px] tracking-[-0.1px]`}>3D View bar</span>
      <span className={`${labelFont} top-[663px] left-[327px] tracking-[-0.28px]`}>Transition Animation control</span>
      <span className={`${labelFont} top-[663px] left-[802px] tracking-[-0.25px]`}>DPL table</span>
    </main>
  );
}
